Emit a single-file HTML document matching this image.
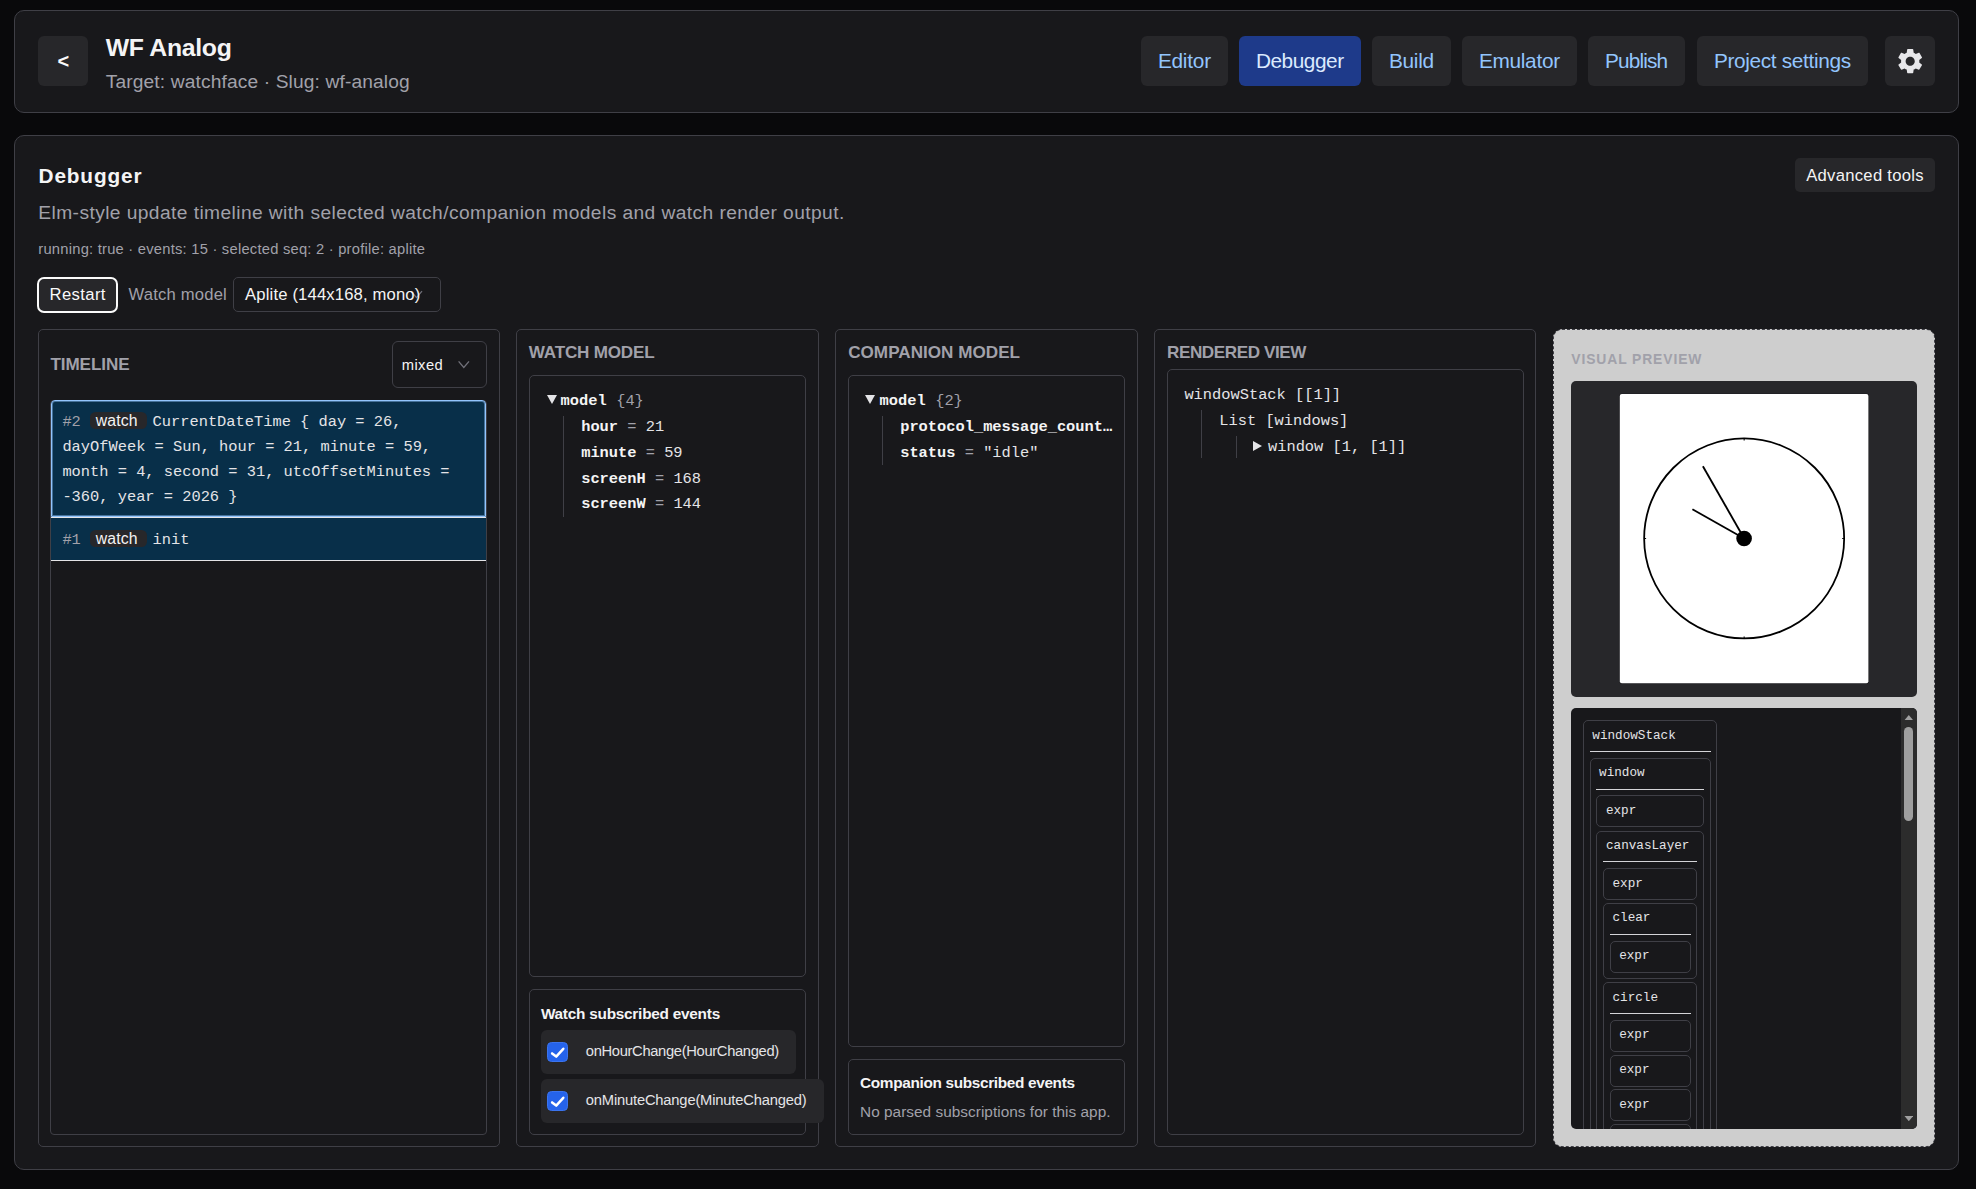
<!DOCTYPE html>
<html lang="en"><head><meta charset="utf-8"><title>WF Analog - Debugger</title>
<style>
html,body{margin:0;padding:0;background:#09090b;}
body{width:1976px;height:1189px;position:relative;overflow:hidden;font-family:"Liberation Sans",sans-serif;}
.b{position:absolute;box-sizing:border-box;}
.t{position:absolute;white-space:pre;margin:0;padding:0;display:block;}
</style></head><body>
<div class="b" style="left:14px;top:10px;width:1945px;height:103px;background:#18181b;border:1px solid #3f3f46;border-radius:10px;"></div>
<div class="b" style="left:38px;top:36px;width:50px;height:50px;background:#27272a;border-radius:6px;"></div>
<span class="t" style="left:57.40px;top:50.30px;font:700 20px/22px 'Liberation Sans', sans-serif;color:#fafafa;">&lt;</span>
<h1 class="t" style="left:105.70px;top:34.20px;font:700 24.8px/27px 'Liberation Sans', sans-serif;color:#f4f4f5;letter-spacing:-0.308px;">WF Analog</h1>
<span class="t" style="left:105.70px;top:70.80px;font:400 19.2px/21px 'Liberation Sans', sans-serif;color:#a1a1aa;letter-spacing:0.127px;">Target: watchface · Slug: wf-analog</span>
<div class="b" style="left:1141px;top:36px;width:87px;height:50px;background:#27272a;border-radius:6px;"></div>
<span class="t" style="left:1157.90px;top:49.10px;font:400 20.8px/23px 'Liberation Sans', sans-serif;color:#93c5fd;letter-spacing:-0.227px;">Editor</span>
<div class="b" style="left:1239px;top:36px;width:122px;height:50px;background:#1e3a8a;border-radius:6px;"></div>
<span class="t" style="left:1255.90px;top:49.10px;font:400 20.8px/23px 'Liberation Sans', sans-serif;color:#dbeafe;letter-spacing:-0.451px;">Debugger</span>
<div class="b" style="left:1372px;top:36px;width:79px;height:50px;background:#27272a;border-radius:6px;"></div>
<span class="t" style="left:1388.90px;top:49.10px;font:400 20.8px/23px 'Liberation Sans', sans-serif;color:#93c5fd;letter-spacing:-0.263px;">Build</span>
<div class="b" style="left:1462px;top:36px;width:115px;height:50px;background:#27272a;border-radius:6px;"></div>
<span class="t" style="left:1478.90px;top:49.10px;font:400 20.8px/23px 'Liberation Sans', sans-serif;color:#93c5fd;letter-spacing:-0.290px;">Emulator</span>
<div class="b" style="left:1588px;top:36px;width:97px;height:50px;background:#27272a;border-radius:6px;"></div>
<span class="t" style="left:1604.90px;top:49.10px;font:400 20.8px/23px 'Liberation Sans', sans-serif;color:#93c5fd;letter-spacing:-0.837px;">Publish</span>
<div class="b" style="left:1697px;top:36px;width:171px;height:50px;background:#27272a;border-radius:6px;"></div>
<span class="t" style="left:1713.90px;top:49.10px;font:400 20.8px/23px 'Liberation Sans', sans-serif;color:#93c5fd;letter-spacing:-0.333px;">Project settings</span>
<div class="b" style="left:1885px;top:36px;width:50px;height:50px;background:#27272a;border-radius:6px;"><svg viewBox="0 0 24 24" width="30.4" height="30.4" style="position:absolute;left:9.8px;top:9.8px"><path fill="#e7e7ea" d="M19.14,12.94c0.04-0.3,0.06-0.61,0.06-0.94c0-0.32-0.02-0.64-0.07-0.94l2.03-1.58c0.18-0.14,0.23-0.41,0.12-0.61 l-1.92-3.32c-0.12-0.22-0.37-0.29-0.59-0.22l-2.39,0.96c-0.5-0.38-1.03-0.7-1.62-0.94L14.4,2.81c-0.04-0.24-0.24-0.41-0.48-0.41 h-3.84c-0.24,0-0.43,0.17-0.47,0.41L9.25,5.35C8.66,5.59,8.12,5.92,7.63,6.29L5.24,5.33c-0.22-0.08-0.47,0-0.59,0.22L2.74,8.87 C2.62,9.08,2.66,9.34,2.86,9.48l2.03,1.58C4.84,11.36,4.8,11.69,4.8,12s0.02,0.64,0.07,0.94l-2.03,1.58 c-0.18,0.14-0.23,0.41-0.12,0.61l1.92,3.32c0.12,0.22,0.37,0.29,0.59,0.22l2.39-0.96c0.5,0.38,1.03,0.7,1.62,0.94l0.36,2.54 c0.05,0.24,0.24,0.41,0.48,0.41h3.84c0.24,0,0.44-0.17,0.47-0.41l0.36-2.54c0.59-0.24,1.13-0.56,1.62-0.94l2.39,0.96 c0.22,0.08,0.47,0,0.59-0.22l1.92-3.32c0.12-0.22,0.07-0.47-0.12-0.61L19.14,12.94z M12,15.6c-1.98,0-3.6-1.62-3.6-3.6 s1.62-3.6,3.6-3.6s3.6,1.62,3.6,3.6S13.98,15.6,12,15.6z"/></svg></div>
<div class="b" style="left:14px;top:135px;width:1945px;height:1035px;background:#18181b;border:1px solid #3f3f46;border-radius:10px;"></div>
<h2 class="t" style="left:38.50px;top:163.90px;font:700 20.8px/23px 'Liberation Sans', sans-serif;color:#f4f4f5;letter-spacing:0.861px;">Debugger</h2>
<span class="t" style="left:38.30px;top:201.70px;font:400 19.2px/21px 'Liberation Sans', sans-serif;color:#a1a1aa;letter-spacing:0.418px;">Elm-style update timeline with selected watch/companion models and watch render output.</span>
<span class="t" style="left:38.30px;top:240.80px;font:400 14.72px/16px 'Liberation Sans', sans-serif;color:#a1a1aa;letter-spacing:0.236px;">running: true · events: 15 · selected seq: 2 · profile: aplite</span>
<div class="b" style="left:1795px;top:158px;width:140px;height:34px;background:#27272a;border-radius:5px;"></div>
<span class="t" style="left:1806.20px;top:165.90px;font:400 16.64px/19px 'Liberation Sans', sans-serif;color:#f4f4f5;letter-spacing:0.286px;">Advanced tools</span>
<div class="b" style="left:36.7px;top:277px;width:81.6px;height:35.5px;background:#27272a;border:2px solid #fafafa;border-radius:7px;"></div>
<span class="t" style="left:49.60px;top:284.50px;font:400 16.64px/19px 'Liberation Sans', sans-serif;color:#fafafa;letter-spacing:0.378px;">Restart</span>
<span class="t" style="left:128.60px;top:284.50px;font:400 16.64px/19px 'Liberation Sans', sans-serif;color:#a1a1aa;letter-spacing:0.182px;">Watch model</span>
<div class="b" style="left:233px;top:277px;width:208px;height:35px;background:#18181b;border:1px solid #3f3f46;border-radius:5px;"></div>
<svg class="b" style="left:410px;top:290px" width="13" height="10" viewBox="0 0 13 10"><path d="M1 1.2 L6.5 7.6 L12 1.2" fill="none" stroke="#71717a" stroke-width="1.3"/></svg>
<span class="t" style="left:245.10px;top:284.60px;font:400 16.64px/19px 'Liberation Sans', sans-serif;color:#f4f4f5;letter-spacing:0.155px;">Aplite (144x168, mono)</span>
<div class="b" style="left:38px;top:329px;width:462px;height:818px;border:1px solid #3f3f46;border-radius:5px;"></div>
<div class="b" style="left:516px;top:329px;width:303px;height:818px;border:1px solid #3f3f46;border-radius:5px;"></div>
<div class="b" style="left:835px;top:329px;width:303px;height:818px;border:1px solid #3f3f46;border-radius:5px;"></div>
<div class="b" style="left:1154px;top:329px;width:382px;height:818px;border:1px solid #3f3f46;border-radius:5px;"></div>
<span class="t" style="left:50.40px;top:355.10px;font:700 17.1px/19px 'Liberation Sans', sans-serif;color:#a1a1aa;letter-spacing:-0.085px;">TIMELINE</span>
<span class="t" style="left:528.80px;top:343.10px;font:700 17.1px/19px 'Liberation Sans', sans-serif;color:#a1a1aa;letter-spacing:-0.202px;">WATCH MODEL</span>
<span class="t" style="left:848.20px;top:343.10px;font:700 17.1px/19px 'Liberation Sans', sans-serif;color:#a1a1aa;letter-spacing:0.020px;">COMPANION MODEL</span>
<span class="t" style="left:1167.00px;top:343.30px;font:700 17.1px/19px 'Liberation Sans', sans-serif;color:#a1a1aa;letter-spacing:-0.410px;">RENDERED VIEW</span>
<div class="b" style="left:392px;top:341px;width:95px;height:47px;background:#18181b;border:1px solid #3f3f46;border-radius:6px;"></div>
<span class="t" style="left:401.70px;top:357.00px;font:400 14.72px/16px 'Liberation Sans', sans-serif;color:#f4f4f5;letter-spacing:0.434px;">mixed</span>
<svg class="b" style="left:457px;top:360px" width="14" height="10" viewBox="0 0 14 10"><path d="M1.6 1.3 L6.8 7.5 L12 1.3" fill="none" stroke="#71717a" stroke-width="1.3"/></svg>
<div class="b" style="left:50px;top:400px;width:437px;height:735px;border:1px solid #3f3f46;border-radius:4px;"></div>
<div class="b" style="left:51px;top:400px;width:435px;height:117px;background:#082f49;border:1px solid #93c5fd;border-radius:4px 4px 0 0;box-shadow:inset 0 0 0 1px rgba(147,197,253,.45);"></div>
<div class="b" style="left:51px;top:517px;width:435px;height:1px;background:#e4e4e7;"></div>
<div class="b" style="left:51px;top:518px;width:435px;height:42px;background:#082f49;"></div>
<div class="b" style="left:51px;top:560px;width:435px;height:1px;background:#e4e4e7;"></div>
<span class="t" style="left:62.40px;top:413.30px;font:400 15.36px/18px 'Liberation Mono', monospace;color:#a1a1aa;">#2</span>
<div class="b" style="left:90.2px;top:412.2px;width:56.4px;height:16.6px;background:#27272a;border-radius:5.5px;"></div>
<span class="t" style="left:95.82px;top:411.70px;font:400 15.8px/17px 'Liberation Sans', sans-serif;color:#f4f4f5;letter-spacing:0.126px;">watch</span>
<span class="t" style="left:152.60px;top:413.30px;font:400 15.36px/18px 'Liberation Mono', monospace;color:#e4e4e7;">CurrentDateTime { day = 26,</span>
<span class="t" style="left:62.40px;top:438.30px;font:400 15.36px/18px 'Liberation Mono', monospace;color:#e4e4e7;">dayOfWeek = Sun, hour = 21, minute = 59,</span>
<span class="t" style="left:62.40px;top:463.30px;font:400 15.36px/18px 'Liberation Mono', monospace;color:#e4e4e7;">month = 4, second = 31, utcOffsetMinutes =</span>
<span class="t" style="left:62.40px;top:488.30px;font:400 15.36px/18px 'Liberation Mono', monospace;color:#e4e4e7;">-360, year = 2026 }</span>
<span class="t" style="left:62.40px;top:531.00px;font:400 15.36px/18px 'Liberation Mono', monospace;color:#a1a1aa;">#1</span>
<div class="b" style="left:90.2px;top:530.2px;width:56.4px;height:16.6px;background:#27272a;border-radius:5.5px;"></div>
<span class="t" style="left:95.82px;top:530.10px;font:400 15.8px/17px 'Liberation Sans', sans-serif;color:#f4f4f5;letter-spacing:0.126px;">watch</span>
<span class="t" style="left:152.60px;top:531.00px;font:400 15.36px/18px 'Liberation Mono', monospace;color:#e4e4e7;">init</span>
<div class="b" style="left:529px;top:375px;width:277px;height:602px;border:1px solid #3f3f46;border-radius:5px;"></div>
<svg class="b" style="left:546.5px;top:395.3px" width="10" height="9" viewBox="0 0 10 9"><path d="M0 0 H10 L5 9 Z" fill="#e4e4e7"/></svg>
<span class="t" style="left:560.60px;top:391.90px;font:700 15.36px/18px 'Liberation Mono', monospace;color:#f4f4f5;">model</span>
<span class="t" style="left:616.20px;top:391.90px;font:400 15.36px/18px 'Liberation Mono', monospace;color:#a1a1aa;">{4}</span>
<div class="b" style="left:563px;top:416px;width:1px;height:101px;background:#3f3f46;"></div>
<span class="t" style="left:581.20px;top:418.00px;font:700 15.36px/18px 'Liberation Mono', monospace;color:#f4f4f5;">hour</span>
<span class="t" style="left:627.29px;top:418.00px;font:400 15.36px/18px 'Liberation Mono', monospace;color:#a1a1aa;">=</span>
<span class="t" style="left:645.72px;top:418.00px;font:400 15.36px/18px 'Liberation Mono', monospace;color:#e4e4e7;">21</span>
<span class="t" style="left:581.20px;top:444.00px;font:700 15.36px/18px 'Liberation Mono', monospace;color:#f4f4f5;">minute</span>
<span class="t" style="left:645.72px;top:444.00px;font:400 15.36px/18px 'Liberation Mono', monospace;color:#a1a1aa;">=</span>
<span class="t" style="left:664.16px;top:444.00px;font:400 15.36px/18px 'Liberation Mono', monospace;color:#e4e4e7;">59</span>
<span class="t" style="left:581.20px;top:470.00px;font:700 15.36px/18px 'Liberation Mono', monospace;color:#f4f4f5;">screenH</span>
<span class="t" style="left:654.94px;top:470.00px;font:400 15.36px/18px 'Liberation Mono', monospace;color:#a1a1aa;">=</span>
<span class="t" style="left:673.38px;top:470.00px;font:400 15.36px/18px 'Liberation Mono', monospace;color:#e4e4e7;">168</span>
<span class="t" style="left:581.20px;top:495.40px;font:700 15.36px/18px 'Liberation Mono', monospace;color:#f4f4f5;">screenW</span>
<span class="t" style="left:654.94px;top:495.40px;font:400 15.36px/18px 'Liberation Mono', monospace;color:#a1a1aa;">=</span>
<span class="t" style="left:673.38px;top:495.40px;font:400 15.36px/18px 'Liberation Mono', monospace;color:#e4e4e7;">144</span>
<div class="b" style="left:529px;top:989px;width:277px;height:146px;border:1px solid #3f3f46;border-radius:5px;"></div>
<span class="t" style="left:540.90px;top:1005.30px;font:700 15.36px/17px 'Liberation Sans', sans-serif;color:#f4f4f5;letter-spacing:-0.244px;">Watch subscribed events</span>
<div class="b" style="left:541px;top:1029.7px;width:255px;height:44.2px;background:#27272a;border-radius:6px;"></div>
<div class="b" style="left:546.8px;top:1041.7px;width:21.4px;height:20.4px;background:#2563eb;border:1px solid #3b74ee;border-radius:4.5px;"><svg width="21.4" height="20.4" viewBox="0 0 21.4 20.4" style="position:absolute;left:-1px;top:-1px"><path d="M5.1 11.4 L9.2 14.6 L16.3 6.8" fill="none" stroke="#fff" stroke-width="2.5" stroke-linecap="round" stroke-linejoin="round"/></svg></div>
<span class="t" style="left:585.80px;top:1042.80px;font:400 14.72px/16px 'Liberation Sans', sans-serif;color:#e4e4e7;letter-spacing:-0.329px;">onHourChange(HourChanged)</span>
<div class="b" style="left:541px;top:1079px;width:282.8px;height:44px;background:#27272a;border-radius:6px;"></div>
<div class="b" style="left:546.8px;top:1090.8px;width:21.4px;height:20.4px;background:#2563eb;border:1px solid #3b74ee;border-radius:4.5px;"><svg width="21.4" height="20.4" viewBox="0 0 21.4 20.4" style="position:absolute;left:-1px;top:-1px"><path d="M5.1 11.4 L9.2 14.6 L16.3 6.8" fill="none" stroke="#fff" stroke-width="2.5" stroke-linecap="round" stroke-linejoin="round"/></svg></div>
<span class="t" style="left:585.80px;top:1091.90px;font:400 14.72px/16px 'Liberation Sans', sans-serif;color:#e4e4e7;letter-spacing:-0.180px;">onMinuteChange(MinuteChanged)</span>
<div class="b" style="left:848px;top:375px;width:277px;height:672px;border:1px solid #3f3f46;border-radius:5px;"></div>
<svg class="b" style="left:865.3px;top:395.3px" width="10" height="9" viewBox="0 0 10 9"><path d="M0 0 H10 L5 9 Z" fill="#e4e4e7"/></svg>
<span class="t" style="left:879.60px;top:391.90px;font:700 15.36px/18px 'Liberation Mono', monospace;color:#f4f4f5;">model</span>
<span class="t" style="left:935.20px;top:391.90px;font:400 15.36px/18px 'Liberation Mono', monospace;color:#a1a1aa;">{2}</span>
<div class="b" style="left:882px;top:416px;width:1px;height:49px;background:#3f3f46;"></div>
<span class="t" style="left:900.20px;top:417.70px;font:700 15.36px/18px 'Liberation Mono', monospace;color:#f4f4f5;">protocol_message_count…</span>
<span class="t" style="left:900.20px;top:443.50px;font:700 15.36px/18px 'Liberation Mono', monospace;color:#f4f4f5;">status</span>
<span class="t" style="left:964.72px;top:443.50px;font:400 15.36px/18px 'Liberation Mono', monospace;color:#a1a1aa;">=</span>
<span class="t" style="left:983.16px;top:443.50px;font:400 15.36px/18px 'Liberation Mono', monospace;color:#e4e4e7;">"idle"</span>
<div class="b" style="left:848px;top:1059px;width:277px;height:76px;border:1px solid #3f3f46;border-radius:5px;"></div>
<span class="t" style="left:860.00px;top:1074.00px;font:700 15.36px/17px 'Liberation Sans', sans-serif;color:#f4f4f5;letter-spacing:-0.332px;">Companion subscribed events</span>
<span class="t" style="left:860.00px;top:1102.70px;font:400 15.36px/17px 'Liberation Sans', sans-serif;color:#a1a1aa;letter-spacing:0.033px;">No parsed subscriptions for this app.</span>
<div class="b" style="left:1167px;top:369px;width:357px;height:766px;border:1px solid #3f3f46;border-radius:5px;"></div>
<span class="t" style="left:1184.40px;top:385.90px;font:400 15.36px/18px 'Liberation Mono', monospace;color:#e4e4e7;">windowStack [[1]]</span>
<span class="t" style="left:1219.30px;top:412.40px;font:400 15.36px/18px 'Liberation Mono', monospace;color:#e4e4e7;">List [windows]</span>
<svg class="b" style="left:1253px;top:441px" width="9" height="10" viewBox="0 0 9 10"><path d="M0 0 V10 L9 5 Z" fill="#e4e4e7"/></svg>
<span class="t" style="left:1268.00px;top:438.20px;font:400 15.36px/18px 'Liberation Mono', monospace;color:#e4e4e7;">window [1, [1]]</span>
<div class="b" style="left:1201px;top:410px;width:1px;height:48px;background:#3f3f46;"></div>
<div class="b" style="left:1236px;top:436px;width:1px;height:22px;background:#3f3f46;"></div>
<div class="b" style="left:1553px;top:329px;width:382px;height:818px;background:#cecece;border:1px dashed #3f3f46;border-radius:9px;"></div>
<span class="t" style="left:1571.30px;top:350.70px;font:700 13.9px/16px 'Liberation Sans', sans-serif;color:#a1a1aa;letter-spacing:0.886px;">VISUAL PREVIEW</span>
<div class="b" style="left:1571px;top:381px;width:346px;height:315.5px;background:#27272a;border-radius:5px;"></div>
<svg class="b" style="left:1619px;top:393px" width="251" height="292" viewBox="0 0 251 292">
<rect x="0.3" y="0.4" width="249.6" height="290.3" rx="2.4" fill="#1d1d20"/>
<rect x="0.8" y="0.9" width="248.6" height="289.3" rx="2" fill="#fff"/>
<circle cx="125.15" cy="145.45" r="100" fill="none" stroke="#000" stroke-width="1.8"/>
<path d="M125.15 45.4v2M125.15 245.5v-2M25.1 145.45h2M225.2 145.45h-2" stroke="#000" stroke-width="1.1"/>
<line x1="125.15" y1="145.45" x2="83.9" y2="73.3" stroke="#000" stroke-width="1.85"/>
<line x1="125.15" y1="145.45" x2="73.4" y2="116.3" stroke="#000" stroke-width="1.85"/>
<circle cx="125.1" cy="145.45" r="7.8" fill="#000"/>
</svg>
<div class="b" style="left:1571px;top:708px;width:346px;height:421px;background:#18181b;border-radius:5px;overflow:hidden;"><div class="b" style="left:12px;top:12px;width:134px;height:500px;border:1px solid #3f3f46;border-radius:5px"></div><span class="t" style="left:21.30px;top:20.1px;font:400 12.65px/15px 'Liberation Mono', monospace;color:#e4e4e7">windowStack</span><div class="b" style="left:19px;top:43px;width:121px;height:1px;background:#d4d4d8"></div><div class="b" style="left:19px;top:50px;width:121px;height:480px;border:1px solid #3f3f46;border-radius:5px"></div><span class="t" style="left:28.10px;top:56.9px;font:400 12.65px/15px 'Liberation Mono', monospace;color:#e4e4e7">window</span><div class="b" style="left:25px;top:81px;width:108px;height:1px;background:#d4d4d8"></div><div class="b" style="left:25px;top:87px;width:108px;height:31.5px;border:1px solid #3f3f46;border-radius:5px"></div><span class="t" style="left:34.90px;top:94.8px;font:400 12.65px/15px 'Liberation Mono', monospace;color:#e4e4e7">expr</span><div class="b" style="left:25px;top:122.5px;width:108px;height:400px;border:1px solid #3f3f46;border-radius:5px"></div><span class="t" style="left:35.00px;top:130.2px;font:400 12.65px/15px 'Liberation Mono', monospace;color:#e4e4e7">canvasLayer</span><div class="b" style="left:32px;top:153px;width:94px;height:1px;background:#d4d4d8"></div><div class="b" style="left:32px;top:160px;width:94px;height:31.5px;border:1px solid #3f3f46;border-radius:5px"></div><span class="t" style="left:41.50px;top:167.9px;font:400 12.65px/15px 'Liberation Mono', monospace;color:#e4e4e7">expr</span><div class="b" style="left:32px;top:195px;width:94px;height:76px;border:1px solid #3f3f46;border-radius:5px"></div><span class="t" style="left:41.50px;top:201.8px;font:400 12.65px/15px 'Liberation Mono', monospace;color:#e4e4e7">clear</span><div class="b" style="left:39px;top:226px;width:81px;height:1px;background:#d4d4d8"></div><div class="b" style="left:39px;top:233px;width:81px;height:31.5px;border:1px solid #3f3f46;border-radius:5px"></div><span class="t" style="left:48.20px;top:239.9px;font:400 12.65px/15px 'Liberation Mono', monospace;color:#e4e4e7">expr</span><div class="b" style="left:32px;top:274px;width:94px;height:300px;border:1px solid #3f3f46;border-radius:5px"></div><span class="t" style="left:41.50px;top:281.8px;font:400 12.65px/15px 'Liberation Mono', monospace;color:#e4e4e7">circle</span><div class="b" style="left:39px;top:305px;width:81px;height:1px;background:#d4d4d8"></div><div class="b" style="left:39px;top:312px;width:81px;height:31.5px;border:1px solid #3f3f46;border-radius:5px"></div><span class="t" style="left:48.20px;top:318.6px;font:400 12.65px/15px 'Liberation Mono', monospace;color:#e4e4e7">expr</span><div class="b" style="left:39px;top:347px;width:81px;height:31.5px;border:1px solid #3f3f46;border-radius:5px"></div><span class="t" style="left:48.20px;top:353.5px;font:400 12.65px/15px 'Liberation Mono', monospace;color:#e4e4e7">expr</span><div class="b" style="left:39px;top:381px;width:81px;height:32px;border:1px solid #3f3f46;border-radius:5px"></div><span class="t" style="left:48.20px;top:388.5px;font:400 12.65px/15px 'Liberation Mono', monospace;color:#e4e4e7">expr</span><div class="b" style="left:39px;top:416px;width:81px;height:31.5px;border:1px solid #3f3f46;border-radius:5px"></div><div class="b" style="left:330px;top:0;width:16px;height:421px;background:#2c2c2c"></div><div class="b" style="left:333px;top:19px;width:9.3px;height:94px;background:#9f9f9f;border-radius:5px"></div><svg class="b" style="left:332.8px;top:6.7px" width="9.6" height="5.4" viewBox="0 0 10 6"><path d="M0 6 L5 0 L10 6Z" fill="#a0a0a0"/></svg><svg class="b" style="left:332.8px;top:407.9px" width="9.6" height="5.2" viewBox="0 0 10 6"><path d="M0 0 L5 6 L10 0Z" fill="#a0a0a0"/></svg></div>
</body></html>
